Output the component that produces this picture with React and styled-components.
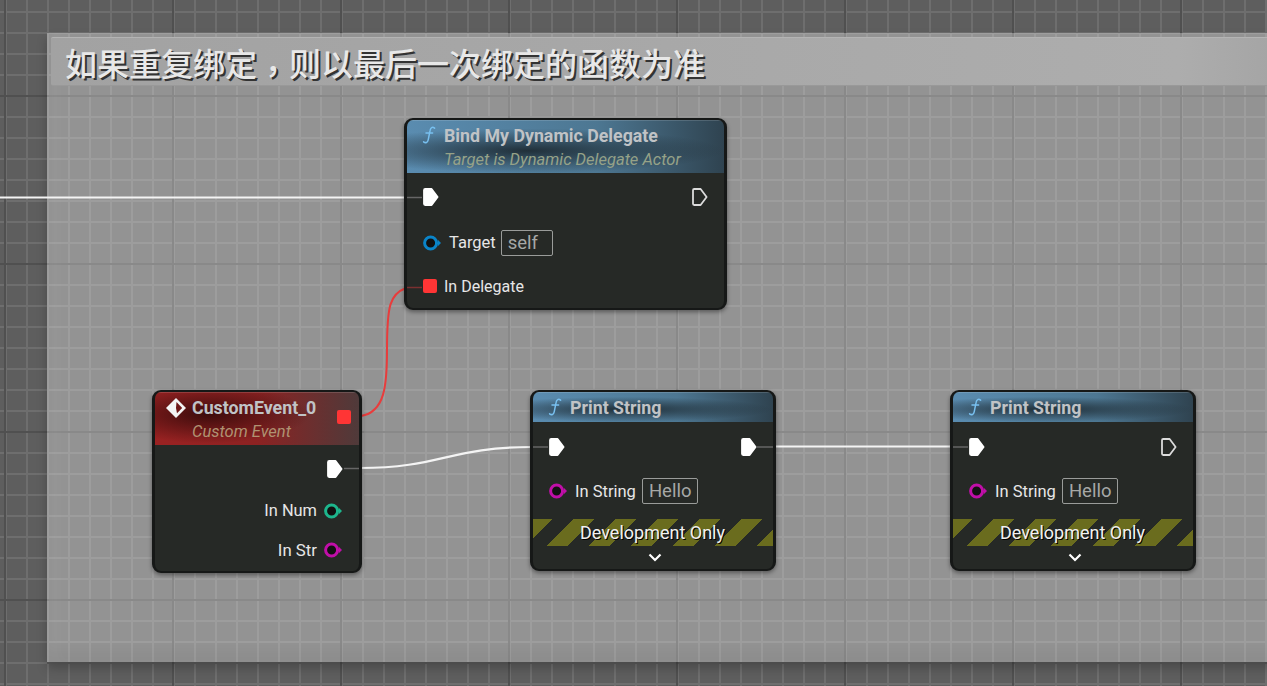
import styled, { createGlobalStyle } from "styled-components";

const GlobalStyle = createGlobalStyle`
  html, body {
    margin: 0;
    padding: 0;
    background: #5e5e5e;
  }
`;

const Canvas = styled.div`
  position: relative;
  width: 1267px;
  height: 686px;
  overflow: hidden;
  font-family: Roboto, "Liberation Sans", sans-serif;
  background-color: #5e5e5e;
  background-image:
    linear-gradient(90deg, #505050 2px, transparent 2px),
    linear-gradient(180deg, #505050 2px, transparent 2px),
    linear-gradient(90deg, #6e6e6e 2px, transparent 2px),
    linear-gradient(180deg, #6e6e6e 2px, transparent 2px);
  background-size: 168px 168px, 168px 168px, 21px 21px, 21px 21px;
  background-position: 4px 0, 0 95px, 5px 0, 0 11px;
`;

const Comment = styled.div`
  position: absolute;
  left: 47px;
  top: 33px;
  width: 1260px;
  height: 629px;
  box-sizing: border-box;
  padding: 4px;
  background: rgba(255, 255, 255, 0.33);
  box-shadow:
    0 2px 0 rgba(60, 60, 60, 0.45),
    0 6px 10px rgba(0, 0, 0, 0.22),
    inset 0 -12px 12px rgba(0, 0, 0, 0.04),
    inset 12px 0 12px rgba(255, 255, 255, 0.03);
`;

const CommentTitle = styled.div`
  height: 49px;
  box-sizing: border-box;
  padding-left: 14px;
  line-height: 48px;
  font-family: "Noto Sans CJK SC", "Noto Sans", sans-serif;
  font-size: 32px;
  font-weight: 500;
  color: #e8e8e8;
  text-shadow: 2px 2px 0 #333;
  white-space: nowrap;
  background: linear-gradient(90deg, #a2a2a2, #adadad 90%, #a2a2a2);
  border-top: 1px solid #b4b4b4;
  border-bottom: 1px solid #999;
  border-radius: 2px 0 0 2px;
`;

// the fullwidth comma sits low and in the middle of its cell in the reference
const CenteredComma = styled.span`
  font-family: "Noto Sans CJK TC", "Noto Sans CJK SC", sans-serif;
  vertical-align: -7px;
`;

const Wires = styled.svg`
  position: absolute;
  left: 0;
  top: 0;
  pointer-events: none;
  z-index: ${(props) => props.$z};
`;

const Node = styled.div`
  position: absolute;
  left: ${(props) => props.$x}px;
  top: ${(props) => props.$y}px;
  width: ${(props) => props.$w}px;
  box-sizing: border-box;
  border-style: solid;
  border-color: #161817;
  border-width: 2px 3px 2px 3px;
  border-radius: 9px;
  background: #262926;
  box-shadow: 0 2px 4px rgba(0, 0, 0, 0.4);
  overflow: hidden;
  z-index: 2;
`;

const Header = styled.div`
  position: relative;
  display: flex;
  align-items: flex-start;
  gap: ${(props) => props.$gap || 4}px;
  height: ${(props) => props.$h}px;
  box-sizing: border-box;
  padding: 5px 0 0 ${(props) => props.$pad || 13}px;
  box-shadow: inset 0 1px 0 rgba(255, 255, 255, 0.14);
  background: ${(props) =>
    props.$kind === "event"
      ? `radial-gradient(ellipse 50% 55% at 26% 42%, rgba(45, 8, 8, 0.85), transparent),
         linear-gradient(90deg, #9a2222, #8c2222 50%, #4f3a3a)`
      : `radial-gradient(ellipse 62% 42% at 38% 58%, rgba(24, 34, 40, 0.85), transparent),
         linear-gradient(90deg, #5a8cb0, #4d7792 60%, #2f4350)`};
`;

const HeaderText = styled.div`
  display: flex;
  flex-direction: column;
`;

const Title = styled.div`
  font-size: 17.8px;
  font-weight: 700;
  line-height: 21px;
  color: #c0c3c6;
  white-space: nowrap;
`;

const Subtitle = styled.div`
  margin-top: 3px;
  font-size: 16.5px;
  font-style: italic;
  line-height: 22px;
  color: ${(props) => (props.$kind === "event" ? "#b09272" : "#96a288")};
  white-space: nowrap;
`;

const HeaderPin = styled.div`
  position: absolute;
  right: 8px;
  top: 18px;
  width: 14px;
  height: 14px;
  border-radius: 2px;
  background: #ff3535;
`;

const Row = styled.div`
  display: flex;
  align-items: center;
  justify-content: ${(props) => props.$justify || "flex-start"};
  gap: ${(props) => props.$gap || 7}px;
  height: ${(props) => props.$h}px;
  padding: 0 16px;
`;

const Label = styled.span`
  font-size: ${(props) => props.$size || 16}px;
  color: #e6e6e6;
  white-space: nowrap;
`;

const Literal = styled.span`
  display: inline-flex;
  align-items: center;
  height: 26px;
  width: ${(props) => props.$w}px;
  margin-left: ${(props) => props.$shift}px;
  box-sizing: border-box;
  padding-left: 6px;
  border: 1.5px solid #9a9c9a;
  border-radius: 2px;
  font-size: 18.5px;
  color: #a6a8a6;
`;

const SquarePin = styled.span`
  width: 14px;
  height: 14px;
  border-radius: 2px;
  background: #ff3535;
`;

const DevBanner = styled.div`
  display: flex;
  align-items: center;
  justify-content: center;
  height: 27px;
  box-sizing: border-box;
  margin-top: 9px;
  padding: 0 1px 1px 0;
  font-size: 18px;
  color: #f2f2f2;
  text-shadow: 1px 1px 0 #000;
  background: repeating-linear-gradient(
    135deg,
    #6a6c1e 0,
    #6a6c1e 14.1px,
    #262926 14.1px,
    #262926 28.3px,
    #6a6c1e 28.3px,
    #6a6c1e 29.7px
  );
`;

const Expander = styled.div`
  display: flex;
  align-items: center;
  justify-content: center;
  height: 23px;
  padding-left: 3px;
`;

const ExecPin = ({ hollow }) => (
  <svg width="16" height="20" viewBox="0 0 16 20">
    <path
      d="M2.2 2H8.6L14.6 10L8.6 18H2.2Q1 18 1 16.8V3.2Q1 2 2.2 2Z"
      fill={hollow ? "none" : "#fff"}
      stroke={hollow ? "#dcdcdc" : "#fff"}
      strokeWidth="1.8"
      strokeLinejoin="round"
    />
  </svg>
);

const DataPin = ({ color }) => (
  <svg width="19" height="16" viewBox="0 0 19 16">
    <circle cx="7.6" cy="8" r="6" fill="#111" stroke={color} strokeWidth="3" />
    <path d="M14.8 4.8L18 8L14.8 11.2Z" fill={color} />
  </svg>
);

const FunctionIcon = () => (
  <svg width="20" height="20" viewBox="0 0 20 20">
    <path
      d="M14.6 3.2C12.4 1.4 10.6 2.6 10.1 5.4L8.2 14.8C7.6 17.6 5.6 18.4 3.6 16.8M6 8H12.6"
      fill="none"
      stroke="#78c0f0"
      strokeWidth="1.5"
      strokeLinecap="round"
    />
  </svg>
);

const EventIcon = () => (
  <svg width="22" height="22" viewBox="0 0 22 22">
    <path d="M11 1L21 11L11 21L1 11Z" fill="#f4f4f4" />
    <path d="M11.5 5L17.2 11L12 16.2L11 11Z" fill="#6e1616" />
  </svg>
);

const Chevron = () => (
  <svg width="14" height="9" viewBox="0 0 14 9">
    <path d="M1.5 1.5L7 7L12.5 1.5" fill="none" stroke="#fff" strokeWidth="2.2" />
  </svg>
);

const PrintString = ({ x, last }) => (
  <Node $x={x} $y={390} $w={246}>
    <Header $h={30}>
      <FunctionIcon />
      <Title>Print String</Title>
    </Header>
    <Row $h={50} $justify="space-between">
      <ExecPin />
      <ExecPin hollow={last} />
    </Row>
    <Row $h={38}>
      <DataPin color="#c00fa8" />
      <Label $size={16.5}>In String</Label>
      <Literal $w={56} $shift={-1}>Hello</Literal>
    </Row>
    <DevBanner>Development Only</DevBanner>
    <Expander>
      <Chevron />
    </Expander>
  </Node>
);

const App = () => {
  return (
    <>
      <GlobalStyle />
      <Canvas>
        <Comment>
          <CommentTitle>
            如果重复绑定<CenteredComma>，</CenteredComma>则以最后一次绑定的函数为准
          </CommentTitle>
        </Comment>

        <Wires width="1267" height="686" $z={1}>
          <path d="M0 197.5H406" fill="none" stroke="#f4f4f4" strokeWidth="2.2" />
          <path d="M776 446.5H952" fill="none" stroke="#f4f4f4" strokeWidth="2.2" />
          <path
            d="M360 468C440 468 450 447 532 447"
            fill="none"
            stroke="#f4f4f4"
            strokeWidth="2.2"
          />
          <path
            d="M361 416C385 412 387 385 387 350C387 305 390 294 406 288"
            fill="none"
            stroke="#e83c3c"
            strokeWidth="2"
          />
        </Wires>

        <Node $x={404} $y={118} $w={323}>
          <Header $h={53}>
            <FunctionIcon />
            <HeaderText>
              <Title>Bind My Dynamic Delegate</Title>
              <Subtitle>Target is Dynamic Delegate Actor</Subtitle>
            </HeaderText>
          </Header>
          <Row $h={48} $justify="space-between">
            <ExecPin />
            <ExecPin hollow />
          </Row>
          <Row $h={43}>
            <DataPin color="#0a84c8" />
            <Label $size={16.5}>Target</Label>
            <Literal $w={52} $shift={-2}>self</Literal>
          </Row>
          <Row $h={44}>
            <SquarePin />
            <Label>In Delegate</Label>
          </Row>
        </Node>

        <Node $x={152} $y={390} $w={210}>
          <Header $kind="event" $h={53} $pad={10} $gap={5}>
            <EventIcon />
            <HeaderText>
              <Title>CustomEvent_0</Title>
              <Subtitle $kind="event">Custom Event</Subtitle>
            </HeaderText>
            <HeaderPin />
          </Header>
          <Row $h={47} $justify="flex-end">
            <ExecPin />
          </Row>
          <Row $h={37} $justify="flex-end">
            <Label $size={16.4}>In Num</Label>
            <DataPin color="#1db58c" />
          </Row>
          <Row $h={42} $justify="flex-end">
            <Label $size={16.8}>In Str</Label>
            <DataPin color="#c00fa8" />
          </Row>
        </Node>

        <PrintString x={530} />
        <PrintString x={950} last />

        <Wires width="1267" height="686" $z={3}>
          <path d="M407 197.5H422" stroke="#666" strokeWidth="1.5" />
          <path d="M533 447H548" stroke="#666" strokeWidth="1.5" />
          <path d="M953 447H968" stroke="#666" strokeWidth="1.5" />
          <path d="M757 447H773" stroke="#666" strokeWidth="1.5" />
          <path d="M344 468.5H359" stroke="#666" strokeWidth="1.5" />
          <path d="M407 287.5H422" stroke="#7a3030" strokeWidth="1.5" />
        </Wires>
      </Canvas>
    </>
  );
};

export default App;
